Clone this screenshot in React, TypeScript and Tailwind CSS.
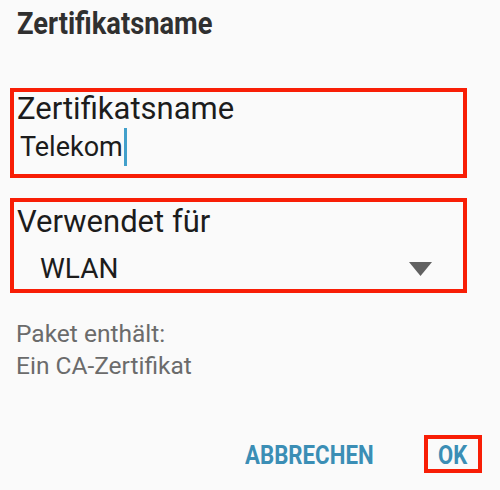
import React from "react";

export default function App() {
  return (
    <div
      className="w-[500px] h-[490px] bg-[#fafafa] overflow-hidden flex flex-col"
      style={{ fontFamily: "Roboto, 'Liberation Sans', sans-serif" }}
    >
      <div className="pt-[4px] pl-[17px] h-[44px]">
        <span className="inline-block origin-left scale-x-[0.88] whitespace-nowrap text-[31px] leading-[40px] font-bold text-[#303030]">
          Zertifikatsname
        </span>
      </div>

      <div className="mt-[44px] ml-[10px] w-[457px] h-[90px] border-[4px] border-[#f81e06] flex flex-col">
        <div className="pl-[3px] text-[31px] leading-[34px] text-[#1c1c1c] whitespace-nowrap">Zertifikatsname</div>
        <div className="mt-[2px] flex items-start pl-[6px] text-[27px] leading-[38px] text-[#1c1c1c]">
          <span>Telekom</span>
          <span className="ml-[1px] w-[3px] h-[38px] bg-[#42a0cb]" />
        </div>
      </div>

      <div className="mt-[20px] ml-[10px] w-[457px] h-[95px] border-[4px] border-[#f81e06] flex flex-col pt-[3px]">
        <div className="pl-[3px] text-[31px] leading-[34px] text-[#1c1c1c] whitespace-nowrap">Verwendet für</div>
        <div className="mt-[10px] flex items-center justify-between pl-[26px] pr-[31px] h-[40px]">
          <span className="text-[28px] leading-[40px] text-[#1c1c1c]">WLAN</span>
          <svg width="23" height="14" viewBox="0 0 23 14">
            <polygon points="0,0 23,0 11.5,14" fill="#616161" />
          </svg>
        </div>
      </div>

      <div className="mt-[25px] pl-[16px] text-[24.5px] leading-[32px] text-[#6b6b6b]">
        <div>Paket enthält:</div>
        <div>Ein CA-Zertifikat</div>
      </div>

      <div className="mt-[53px] flex justify-end items-start pr-[18px]">
        <div className="w-[128px] h-[38px] border-y-[4px] border-transparent pt-[4px]">
          <span className="inline-block origin-left scale-x-[0.89] whitespace-nowrap text-[25px] leading-[26px] font-bold text-[#3b8eb5]">
            ABBRECHEN
          </span>
        </div>
        <div className="ml-[51px] w-[58px] h-[38px] border-[4px] border-[#f81e06] pt-[4px] pl-[10px]">
          <span className="inline-block origin-left scale-x-[0.88] whitespace-nowrap text-[25px] leading-[26px] font-bold text-[#3b8eb5]">
            OK
          </span>
        </div>
      </div>
    </div>
  );
}
